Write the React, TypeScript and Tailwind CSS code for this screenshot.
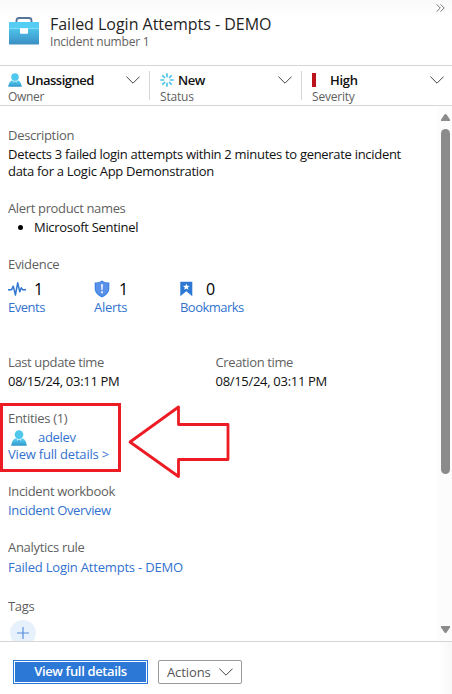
import type { ReactNode } from "react";

function Chevron({ className = "" }: { className?: string }) {
  return (
    <svg className={className} width="14" height="8" viewBox="0 0 14 8" fill="none" stroke="#444" strokeWidth="1">
      <path d="M.4.6 7 7.2 13.6.6" />
    </svg>
  );
}

function Person({ size = 14 }: { size?: number }) {
  return (
    <svg width={size} height={size} viewBox="0 0 14 14" className="shrink-0">
      <defs>
        <linearGradient id="person" x1="0" y1="0" x2="0" y2="1">
          <stop offset="0" stopColor="#5ad2f5" />
          <stop offset="1" stopColor="#2f97c8" />
        </linearGradient>
      </defs>
      <path d="M.4 13.800c-.3-.2-.2-.7 0-1.400.8-3 1.800-4.600 3.400-4.900h6.400c1.600.3 2.600 1.900 3.400 4.900.2.700.3 1.200 0 1.400z" fill="url(#person)" />
      <path d="M4.700 7.500h4.600L7 11.600z" fill="#d4f0fa" />
      <path d="M6.400 8.500h1.200l.4 2L7 12l-1-1.500z" fill="#3aa9d6" />
      <circle cx="7" cy="4" r="3.800" fill="#50c8ee" />
    </svg>
  );
}

function Briefcase() {
  return (
    <svg width="32" height="30" viewBox="0 0 32 30" className="shrink-0">
      <defs>
        <linearGradient id="case" x1="0" y1="0" x2="0" y2="1">
          <stop offset="0" stopColor="#4fc6ec" />
          <stop offset="1" stopColor="#3a8ec2" />
        </linearGradient>
      </defs>
      <path d="M8.500 7V4.500Q8.500 2 11 2h10q2.500 0 2.500 2.500V7" fill="none" stroke="#56739c" strokeWidth="1.800" />
      <path d="M1 12h30v16.500H1z" fill="url(#case)" />
      <path d="M2 6h28q1 0 1 1v5.500H1V7q0-1 1-1z" fill="#53cdf3" />
      <path d="M1 12.500h30" stroke="#8fe0f7" strokeWidth=".8" />
      <path d="M12 12.300h8v4.400q0 1-1 1h-6q-1 0-1-1z" fill="#fff" />
    </svg>
  );
}

function Spinner() {
  return (
    <svg width="14" height="14" viewBox="0 0 14 14" stroke="#4fc3ea" strokeWidth="1.700" className="shrink-0">
      <path d="M7 .3v4M7 9.700v4M.3 7h4M9.700 7h4M2.300 2.300l2.600 2.600M9.100 9.100l2.600 2.600M2.300 11.700l2.600-2.600M9.100 4.900l2.600-2.600" />
    </svg>
  );
}

function Pulse() {
  return (
    <svg width="18" height="16" viewBox="0 0 18 16" fill="none" stroke="#3079d3" strokeWidth="1.500" strokeLinejoin="round">
      <path d="M0 8.700h3.600L5.300 5.200 7.400 14 9.700 1.800l2.100 9 1.500-4 1.300 1.900H18" />
    </svg>
  );
}

function Shield() {
  return (
    <svg width="16" height="18" viewBox="0 0 16 18">
      <defs>
        <linearGradient id="shield" x1="0" y1="0" x2="0" y2="1">
          <stop offset="0" stopColor="#2f78da" />
          <stop offset="1" stopColor="#3784e5" />
        </linearGradient>
      </defs>
      <path d="M8 .4c2 1.500 4.500 2.100 7.300 2.200v6c0 4.400-3.600 7.100-7.300 9-3.700-1.900-7.300-4.600-7.300-9v-6C3.500 2.500 6 1.900 8 .4z" fill="url(#shield)" />
      <path d="M8 1.600c1.700 1.100 3.900 1.900 6.400 1.900v5c0 3.600-3 6.100-6.400 7.800-3.400-1.700-6.400-4.200-6.400-7.800v-5C4.100 3.500 6.300 2.700 8 1.600z" fill="#5a91e9" />
      <path d="M7.100 4.200h1.800l-.4 6h-1z" fill="#fff" />
      <circle cx="8" cy="12.300" r="1" fill="#fff" />
    </svg>
  );
}

function Bookmark() {
  return (
    <svg width="13" height="16" viewBox="0 0 13 16">
      <path d="M.3.700h12v14.600l-6-5.100-6 5.100z" fill="#2c78d4" />
      <path d="m6.300 2.600.9 2.200 2.400.2-1.800 1.500.6 2.300-2.100-1.300-2.100 1.300.6-2.300L3 5l2.400-.2z" fill="#fff" />
    </svg>
  );
}

function Label({ children, className = "" }: { children: ReactNode; className?: string }) {
  return <div className={"whitespace-nowrap text-[#5f5f5f] " + className}>{children}</div>;
}

export default function App() {
  return (
    <div className="relative flex h-[694px] w-[452px] flex-col overflow-hidden bg-white font-['Open_Sans','Noto_Sans',sans-serif] text-[13px] leading-[17px] tracking-[-0.3px] text-[#111]">
      <header className="flex h-[66px] shrink-0 border-b border-[#d6d6d6] bg-linear-to-b from-[#f9f9f9] to-white to-25%">
        <div className="ml-2 mt-4">
          <Briefcase />
        </div>
        <div className="ml-[10px] mt-[13px] grow whitespace-nowrap">
          <h1 className="text-base font-medium leading-[22px] tracking-[-0.020px] text-[#1f1f1f]">Failed Login Attempts - DEMO</h1>
          <p className="text-[12px] leading-[14px] tracking-[-0.220px] text-[#5f5f5f]">Incident number 1</p>
        </div>
        <svg className="mr-[7px] mt-1 shrink-0" width="9" height="8" viewBox="0 0 9 8" fill="none" stroke="#666" strokeWidth=".9">
          <path d="M.7.4 4.300 4 .7 7.600M4.600.4 8.200 4 4.600 7.600" />
        </svg>
      </header>

      <section className="flex h-10 shrink-0 border-b border-[#d6d6d6] pt-[5px]">
        <div className="w-[149px] pl-2">
          <div className="flex h-[18px] items-center">
            <Person />
            <span className="ml-1 grow font-semibold tracking-[-0.480px]">Unassigned</span>
            <Chevron className="mr-[9px]" />
          </div>
          <Label className="-mt-px text-[12px]">Owner</Label>
        </div>
        <div className="h-[29px] w-px bg-[#d6d6d6]" />
        <div className="w-[151px] pl-[10px]">
          <div className="flex h-[18px] items-center">
            <Spinner />
            <span className="ml-1 grow font-semibold tracking-[-0.480px]">New</span>
            <Chevron className="mr-[9px]" />
          </div>
          <Label className="-mt-px text-[12px] tracking-[-0.2px]">Status</Label>
        </div>
        <div className="h-[29px] w-px bg-[#d6d6d6]" />
        <div className="grow pl-[10px]">
          <div className="flex h-[18px] items-center">
            <span className="h-[14px] w-1 bg-[#ba141a]" />
            <span className="ml-[14px] grow font-semibold">High</span>
            <Chevron className="mr-2" />
          </div>
          <Label className="-mt-px text-[12px] tracking-[-0.2px]">Severity</Label>
        </div>
      </section>

      <main className="flex h-[535px] shrink-0 overflow-hidden">
        <div className="relative w-[438px] pl-2 pt-[21px]">
          <Label>Description</Label>
          <p className="mt-[2px] whitespace-nowrap">
            Detects 3 failed login attempts within 2 minutes to generate incident
            <br />
            <span className="tracking-[-0.280px]">data for a Logic App Demonstration</span>
          </p>
          <Label className="mt-5 tracking-[-0.350px]">Alert product names</Label>
          <div className="mt-[2px] flex items-center">
            <span className="ml-[10px] size-[5px] rounded-full bg-black" />
            <span className="ml-[11px]">Microsoft Sentinel</span>
          </div>
          <Label className="mt-5">Evidence</Label>
          <div className="mt-[6px] flex text-[#3272cf]">
            <div className="w-[86px]">
              <div className="flex h-5 items-center">
                <Pulse />
                <span className="ml-2 text-base font-medium text-black">1</span>
              </div>
              <div className="tracking-[-0.480px]">Events</div>
            </div>
            <div className="w-[86px]">
              <div className="flex h-5 items-center">
                <Shield />
                <span className="ml-[9px] text-base font-medium text-black">1</span>
              </div>
              <div>Alerts</div>
            </div>
            <div>
              <div className="flex h-5 items-center">
                <Bookmark />
                <span className="ml-[13px] text-base font-medium text-black">0</span>
              </div>
              <div className="tracking-[-0.530px]">Bookmarks</div>
            </div>
          </div>
          <div className="mt-[38px] flex">
            <div className="w-[207.5px]">
              <Label className="tracking-[-0.370px]">Last update time</Label>
              <div className="mt-[2px]">08/15/24, 03:11 PM</div>
            </div>
            <div>
              <Label className="tracking-[-0.370px]">Creation time</Label>
              <div className="mt-[2px]">08/15/24, 03:11 PM</div>
            </div>
          </div>
          <Label className="mt-5">Entities (1)</Label>
          <div className="mt-[2px] flex h-[17px] items-center pl-[3px] text-[#3272cf]">
            <Person size={16} />
            <span className="ml-[11px]">adelev</span>
          </div>
          <div className="tracking-[-0.2px] text-[#3272cf]">View full details &gt;</div>
          <Label className="mt-5 tracking-[-0.350px]">Incident workbook</Label>
          <div className="mt-[2px] tracking-[-0.350px] text-[#3272cf]">Incident Overview</div>
          <Label className="mt-5">Analytics rule</Label>
          <div className="mt-[3px] tracking-[-0.2px] text-[#3272cf]">Failed Login Attempts - DEMO</div>
          <Label className="mt-[22px]">Tags</Label>
          <div className="ml-[2px] mt-[5px] flex size-[26px] items-center justify-center rounded-full bg-[#e6f1fb]">
            <svg width="12" height="12" viewBox="0 0 12 12" stroke="#5a8ee0" strokeWidth="1.200">
              <path d="M6 0v12M0 6h12" />
            </svg>
          </div>
          <div className="absolute left-0 top-[297px] h-[69px] w-[121px] border-3 border-[#ed1c24]" />
          <svg className="absolute left-[125px] top-[296px]" width="108" height="80" viewBox="125 402 108 80" fill="none" stroke="#ed1c24" strokeWidth="2.800">
            <path d="M130 442 178.500 407V424.500H228V459.500H178.500V476.500z" strokeLinejoin="round" />
          </svg>
        </div>
        <div className="flex w-[14px] flex-col items-center bg-[#fcfcfc] pl-px pt-2">
          <svg width="9" height="7" viewBox="0 0 9 7" fill="#8b8b8b">
            <path d="M3.500.5q1-1 2 0L9 5.500V7H0V5.500z" />
          </svg>
          <div className="mt-2 h-[345px] w-[9px] rounded-full bg-[#8b8b8b]" />
          <svg className="mt-[152px]" width="9" height="7" viewBox="0 0 9 7" fill="#8b8b8b">
            <path d="M3.500 6.500q1 1 2 0L9 1.500V0H0v1.500z" />
          </svg>
        </div>
      </main>

      <footer className="flex grow border-t border-[#d6d6d6] bg-linear-to-l from-[#f8f8f8] to-white to-3% pl-[13px] pt-[18px]">
        <button className="h-6 w-[135px] border border-[#2b78d6] bg-white p-px">
          <span className="flex h-full items-center justify-center whitespace-nowrap bg-[#2b78d6] pb-px font-semibold tracking-[-0.350px] text-white">View full details</span>
        </button>
        <button className="ml-[10px] flex h-6 w-[84px] items-center rounded-[2px] border border-[#999] pl-2 text-[#555]">
          <span className="grow text-left font-medium tracking-[-0.100px]">Actions</span>
          <Chevron className="mr-2" />
        </button>
      </footer>
    </div>
  );
}
